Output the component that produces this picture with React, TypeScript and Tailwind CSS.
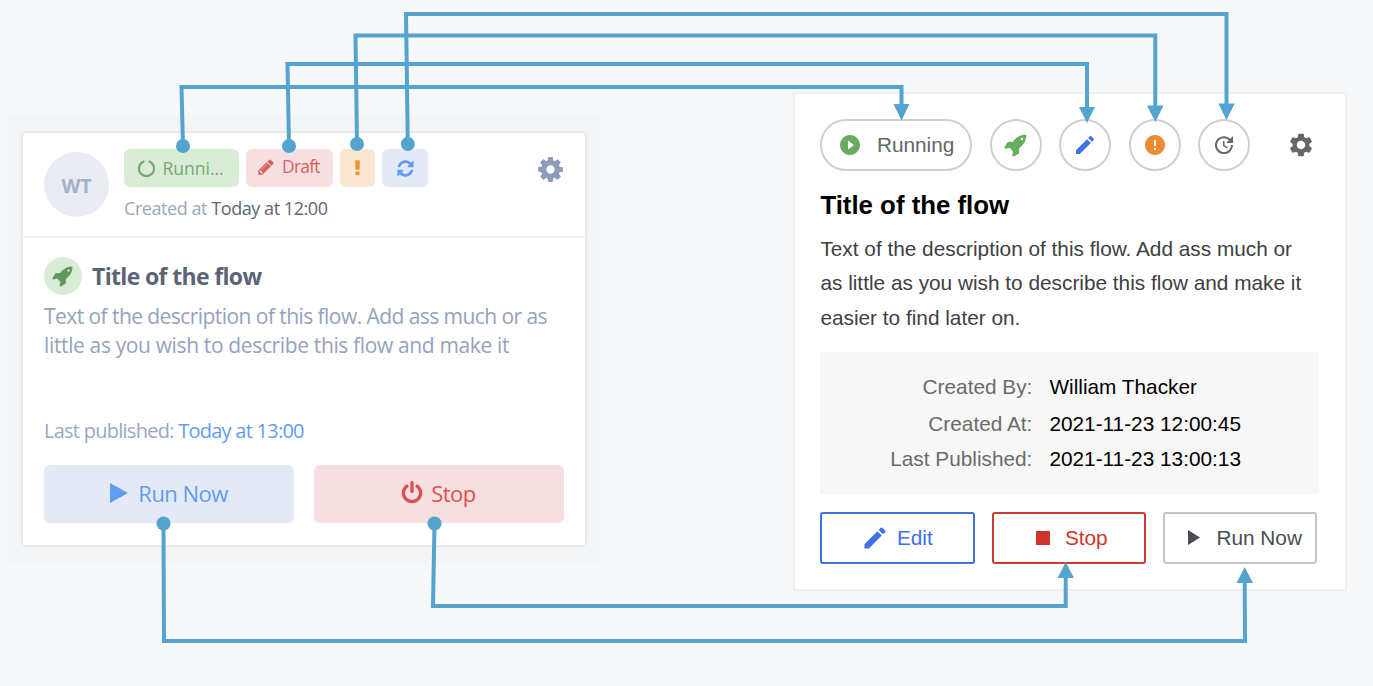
import React from "react";
import { MdPlayCircleFilled, MdEdit, MdError, MdUpdate, MdSettings } from "react-icons/md";

const paths = {
  refresh:
    "M1639 1056q0 5-1 7-64 268-268 434.5t-478 166.5q-146 0-282.5-55t-243.5-157l-129 129q-19 19-45 19t-45-19-19-45v-448q0-26 19-45t45-19h448q26 0 45 19t19 45-19 45l-137 137q71 66 161 102t187 36q134 0 250-65t186-179q11-17 53-117 8-23 30-23h192q13 0 22.5 9.5t9.5 22.5zm25-800v448q0 26-19 45t-45 19h-448q-26 0-45-19t-19-45 19-45l138-138q-148-137-349-137-134 0-250 65t-186 179q-11 17-53 117-8 23-30 23h-199q-13 0-22.5-9.5t-9.5-22.5v-7q65-268 270-434.5t480-166.5q146 0 284 55.5t245 156.5l130-129q19-19 45-19t45 19 19 45z",
  cog: "M1152 896q0-106-75-181t-181-75-181 75-75 181 75 181 181 75 181-75 75-181zm512-109v222q0 12-8 23t-20 13l-185 28q-19 54-39 91 35 50 107 138 10 12 10 25t-9 23q-27 37-99 108t-94 71q-12 0-26-9l-138-108q-44 23-91 38-16 136-29 186-7 28-36 28h-222q-14 0-24.5-8.5t-11.5-21.5l-28-184q-49-16-90-37l-141 107q-10 9-25 9-14 0-25-11-126-114-165-168-7-10-7-23 0-12 8-23 15-21 51-66.5t54-70.5q-27-50-41-99l-183-27q-13-2-21-12.5t-8-23.5v-222q0-12 8-23t19-13l186-28q14-46 39-92-40-57-107-138-10-12-10-24 0-10 9-23 26-36 98.5-107.5t94.5-71.5q13 0 26 10l138 107q44-23 91-38 16-136 29-186 7-28 36-28h222q14 0 24.5 8.5t11.5 21.5l28 184q49 16 90 37l142-107q9-9 24-9 13 0 25 10 129 119 165 170 7 8 7 22 0 12-8 23-15 21-51 66.5t-54 70.5q26 50 41 98l183 28q13 2 21 12.5t8 23.5z",
  rocket:
    "M1440 448q0-40-28-68t-68-28-68 28-28 68 28 68 68 28 68-28 28-68zm224-288q0 249-75.5 430.5t-253.5 360.5q-81 80-195 176l-20 379q-2 16-16 26l-384 224q-7 4-16 4-12 0-23-9l-64-64q-13-14-8-32l85-276-281-281-276 85q-3 1-9 1-14 0-23-9l-64-64q-17-19-5-39l224-384q10-14 26-16l379-20q96-114 176-195 188-187 358-258t431-71q14 0 24 9.5t10 22.5z",
  pencil:
    "M491 1536l91-91-235-235-91 91v107h128v128h107zm523-928q0-22-22-22-10 0-17 7l-542 542q-7 7-7 17 0 22 22 22 10 0 17-7l542-542q7-7 7-17zm-54-192l416 416-832 832h-416v-416zm683 96q0 53-37 90l-166 166-416-416 166-165q36-38 90-38 53 0 91 38l235 234q37 39 37 91z",
  power:
    "M1664 896q0 156-61 298t-164 245-245 164-298 61-298-61-245-164-164-245-61-298q0-182 80.5-343t226.5-270q43-32 95.5-25t83.5 50q32 42 24.5 94.5t-49.5 84.5q-98 74-151.5 181t-53.5 228q0 104 40.5 198.5t109.5 163.5 163.5 109.5 198.5 40.5 198.5-40.5 163.5-109.5 109.5-163.5 40.5-198.5q0-121-53.5-228t-151.5-181q-42-32-49.5-84.5t24.5-94.5q31-43 84-50t95 25q146 109 226.5 270t80.5 343zm-640-768v640q0 52-38 90t-90 38-90-38-38-90v-640q0-52 38-90t90-38 90 38 38 90z",
  exclamation:
    "M1088 1248v224q0 26-19 45t-45 19h-256q-26 0-45-19t-19-45v-224q0-26 19-45t45-19h256q26 0 45 19t19 45zm30-1056l-28 768q-1 26-20.5 45t-45.5 19h-256q-26 0-45.5-19t-20.5-45l-28-768q-1-26 17.5-45t44.5-19h320q26 0 44.5 19t17.5 45z",
};

function Glyph({ name, className }: { name: keyof typeof paths; className: string }) {
  return (
    <svg viewBox="0 0 1792 1792" fill="currentColor" className={`shrink-0 ${className}`}>
      <path d={paths[name]} />
    </svg>
  );
}

function CompactCard() {
  return (
    <section className="mt-[115px] h-[448px] w-[593px] shrink-0 bg-[#f3f4f6] px-[14px] pt-[16px] font-['Open_Sans','Noto_Sans',sans-serif]">
      <div className="h-[416px] w-[566px] rounded-md border-2 border-[#e7e9eb] bg-white whitespace-nowrap">
        <header className="flex h-[105px] border-b-2 border-[#f2f4f6] pt-[16px] pl-[21px]">
          <div className="mt-[3px] flex size-[65px] items-center justify-center rounded-full bg-[#e9edf3] pt-[2px] text-[19.5px] font-bold text-[#a3b1c8]">
            WT
          </div>
          <div className="ml-[15px] w-[400px]">
            <div className="flex gap-[7px] text-[17.5px]">
              <span className="flex h-[38px] w-[115px] items-center rounded-md bg-[#d9edd6] pl-[14px] text-[#76a971]">
                <svg viewBox="0 0 16 16" className="mr-[7.5px] size-[17px] overflow-visible" fill="none" stroke="currentColor" strokeWidth="2">
                  <path d="M6 1.2a7.1 7.1 0 1 0 4 0" />
                </svg>
                Runni...
              </span>
              <span className="flex h-[38px] w-[87px] items-center rounded-md bg-[#f6dfe1] pb-[3px] pl-[11px] tracking-[-0.8px] text-[#d9605d]">
                <Glyph name="pencil" className="mr-[7px] size-[18px]" />
                Draft
              </span>
              <span className="flex h-[38px] w-[35px] items-center justify-center rounded-md bg-[#f9e7d4] text-[#ef9234]">
                <Glyph name="exclamation" className="size-[19px]" />
              </span>
              <span className="flex h-[38px] w-[46px] items-center justify-center rounded-md bg-[#e3eaf5] text-[#629cf0]">
                <Glyph name="refresh" className="size-[19px]" />
              </span>
            </div>
            <p className="mt-[9px] text-[18px] leading-[24px] tracking-[-0.44px] text-[#9aa8c0]">
              Created at <span className="text-[#5d6678]">Today at 12:00</span>
            </p>
          </div>
          <Glyph name="cog" className="mt-[6px] ml-[12px] size-[29px] text-[#8d9cb8]" />
        </header>
        <div className="px-[21px] pt-[19px]">
          <div className="flex items-center">
            <span className="flex size-[38px] items-center justify-center rounded-full bg-[#d9edd6] text-[#64985f]">
              <Glyph name="rocket" className="size-[22px]" />
            </span>
            <h2 className="ml-[10px] text-[23px] leading-[38px] font-bold tracking-[-0.65px] text-[#5b6475]">
              Title of the flow
            </h2>
          </div>
          <p className="mt-[7px] h-[58px] text-[21px] leading-[29px] text-[#94a3bd]">
            <span className="tracking-[-0.56px]">Text of the description of this flow. Add ass much or as</span>
            <br />
            <span className="tracking-[-0.36px]">little as you wish to describe this flow and make it</span>
          </p>
          <p className="mt-[57px] text-[20px] leading-[28px] tracking-[-0.74px] text-[#9aa8c0]">
            Last published: <span className="text-[#629cf0]">Today at 13:00</span>
          </p>
          <div className="mt-[20px] flex gap-[20px] text-[22px] tracking-[-0.55px]">
            <button className="flex h-[58px] w-[250px] items-center justify-center rounded-md bg-[#e3eaf5] pb-[2px] text-[#629cf0]">
              <svg viewBox="0 0 18 20" className="mr-[10px] h-[20px] w-[18px]" fill="currentColor">
                <path d="M0 0L18 10L0 20Z" />
              </svg>
              Run Now
            </button>
            <button className="flex h-[58px] w-[250px] items-center justify-center rounded-md bg-[#f6dfe1] pr-[2px] pb-[2px] text-[#d9534f]">
              <Glyph name="power" className="mr-[7px] size-[24px]" />
              Stop
            </button>
          </div>
        </div>
      </div>
    </section>
  );
}

function Round({ children }: { children: React.ReactNode }) {
  return (
    <span className="flex size-[52px] items-center justify-center rounded-full border-2 border-[#d0d0d0]">
      {children}
    </span>
  );
}

function DetailCard() {
  return (
    <section className="mt-[92px] ml-[193px] h-[499px] w-[554px] shrink-0 border-2 border-[#eeeff0] bg-white pt-[25px] pl-[25.4px] font-['Liberation_Sans',Arial,sans-serif] whitespace-nowrap">
      <div className="flex items-center gap-[17.5px]">
        <span className="flex h-[52px] w-[152px] items-center rounded-full border-2 border-[#d0d0d0] pl-[16px] text-[20.8px] text-[#666]">
          <MdPlayCircleFilled className="mr-[14.5px] size-[24px] text-[#66ae5b]" />
          Running
        </span>
        <Round>
          <Glyph name="rocket" className="size-[24px] text-[#66ae5b]" />
        </Round>
        <Round>
          <MdEdit className="size-[24px] text-[#4170ea]" />
        </Round>
        <Round>
          <MdError className="size-[24px] text-[#ec8b32]" />
        </Round>
        <Round>
          <MdUpdate className="size-[24px] text-[#666]" />
        </Round>
        <MdSettings className="ml-[19.5px] size-[28px] text-[#666]" />
      </div>
      <h2 className="mt-[18px] text-[25.8px] leading-[32px] font-bold text-black">Title of the flow</h2>
      <p className="mt-[10.5px] text-[20.8px] leading-[34.5px] text-[#404040]">
        Text of the description of this flow. Add ass much or
        <br />
        as little as you wish to describe this flow and make it
        <br />
        easier to find later on.
      </p>
      <dl className="mt-[17px] grid h-[142px] w-[499px] grid-cols-[212px_1fr] grid-rows-[36px_35.5px_35.5px] gap-x-[17px] bg-[#f7f7f7] pt-[17px] text-[20.8px] leading-[35.5px]">
        <dt className="text-right text-[#6b6b6b]">Created By:</dt>
        <dd className="text-black">William Thacker</dd>
        <dt className="pt-[1px] text-right text-[#6b6b6b]">Created At:</dt>
        <dd className="pt-[1px] text-black">2021-11-23 12:00:45</dd>
        <dt className="text-right text-[#6b6b6b]">Last Published:</dt>
        <dd className="text-black">2021-11-23 13:00:13</dd>
      </dl>
      <div className="mt-[17.5px] flex gap-[17px] text-[20.8px]">
        <button className="flex h-[52px] w-[154.5px] items-center rounded-[3px] border-2 border-[#4170e0] pl-[38.5px] text-[#4170ea]">
          <MdEdit className="mr-[8px] size-[28px]" />
          Edit
        </button>
        <button className="flex h-[52px] w-[154.5px] items-center rounded-[3px] border-2 border-[#cf3a33] pl-[42px] text-[#cf352e]">
          <span className="mr-[15px] size-[14px] bg-[#cf352e]" />
          Stop
        </button>
        <button className="flex h-[52px] w-[154px] items-center rounded-[3px] border-2 border-[#c4c4c4] pl-[23px] text-[#4a4d55]">
          <svg viewBox="0 0 12 15" className="mr-[16px] h-[15px] w-[12px]" fill="currentColor">
            <path d="M0 0L12 7.5L0 15Z" />
          </svg>
          Run Now
        </button>
      </div>
    </section>
  );
}

const links = [
  { line: "183,146 181.5,87 901.5,87 901.5,106", dot: [183, 146], tip: "893.5,104 909.5,104 901.5,120.5" },
  { line: "289,146 287.5,64 1087,64 1087,109", dot: [289, 146], tip: "1079,107 1095,107 1087,123" },
  { line: "357,144 355.5,35.5 1155.3,35.5 1155.3,107", dot: [357, 144], tip: "1147,105.5 1163.5,105.5 1155.3,122" },
  { line: "407.8,144 406,14 1226.5,14 1226.5,105", dot: [407.8, 144], tip: "1218.3,103.5 1234.7,103.5 1226.5,120" },
  { line: "434.5,523.5 433,606 1065.7,606 1065.7,576", dot: [434.5, 523.5], tip: "1057.5,578 1074,578 1065.7,562" },
  { line: "163.5,523.5 164,641 1245,641 1244.7,581", dot: [163.5, 523.5], tip: "1236.5,583 1253,583 1244.7,567" },
];

function Connectors() {
  return (
    <svg viewBox="0 0 1373 686" className="pointer-events-none absolute inset-0 h-[686px] w-[1373px]">
      {links.map((l) => (
        <g key={l.line} fill="#55a4cf">
          <polyline points={l.line} fill="none" stroke="#55a4cf" strokeWidth="4" />
          <circle cx={l.dot[0]} cy={l.dot[1]} r="7" />
          <polygon points={l.tip} />
        </g>
      ))}
    </svg>
  );
}

export default function App() {
  return (
    <main className="relative flex h-[686px] w-[1373px] items-start overflow-hidden bg-[#f6f7f9] pl-[7px]">
      <CompactCard />
      <DetailCard />
      <Connectors />
    </main>
  );
}
